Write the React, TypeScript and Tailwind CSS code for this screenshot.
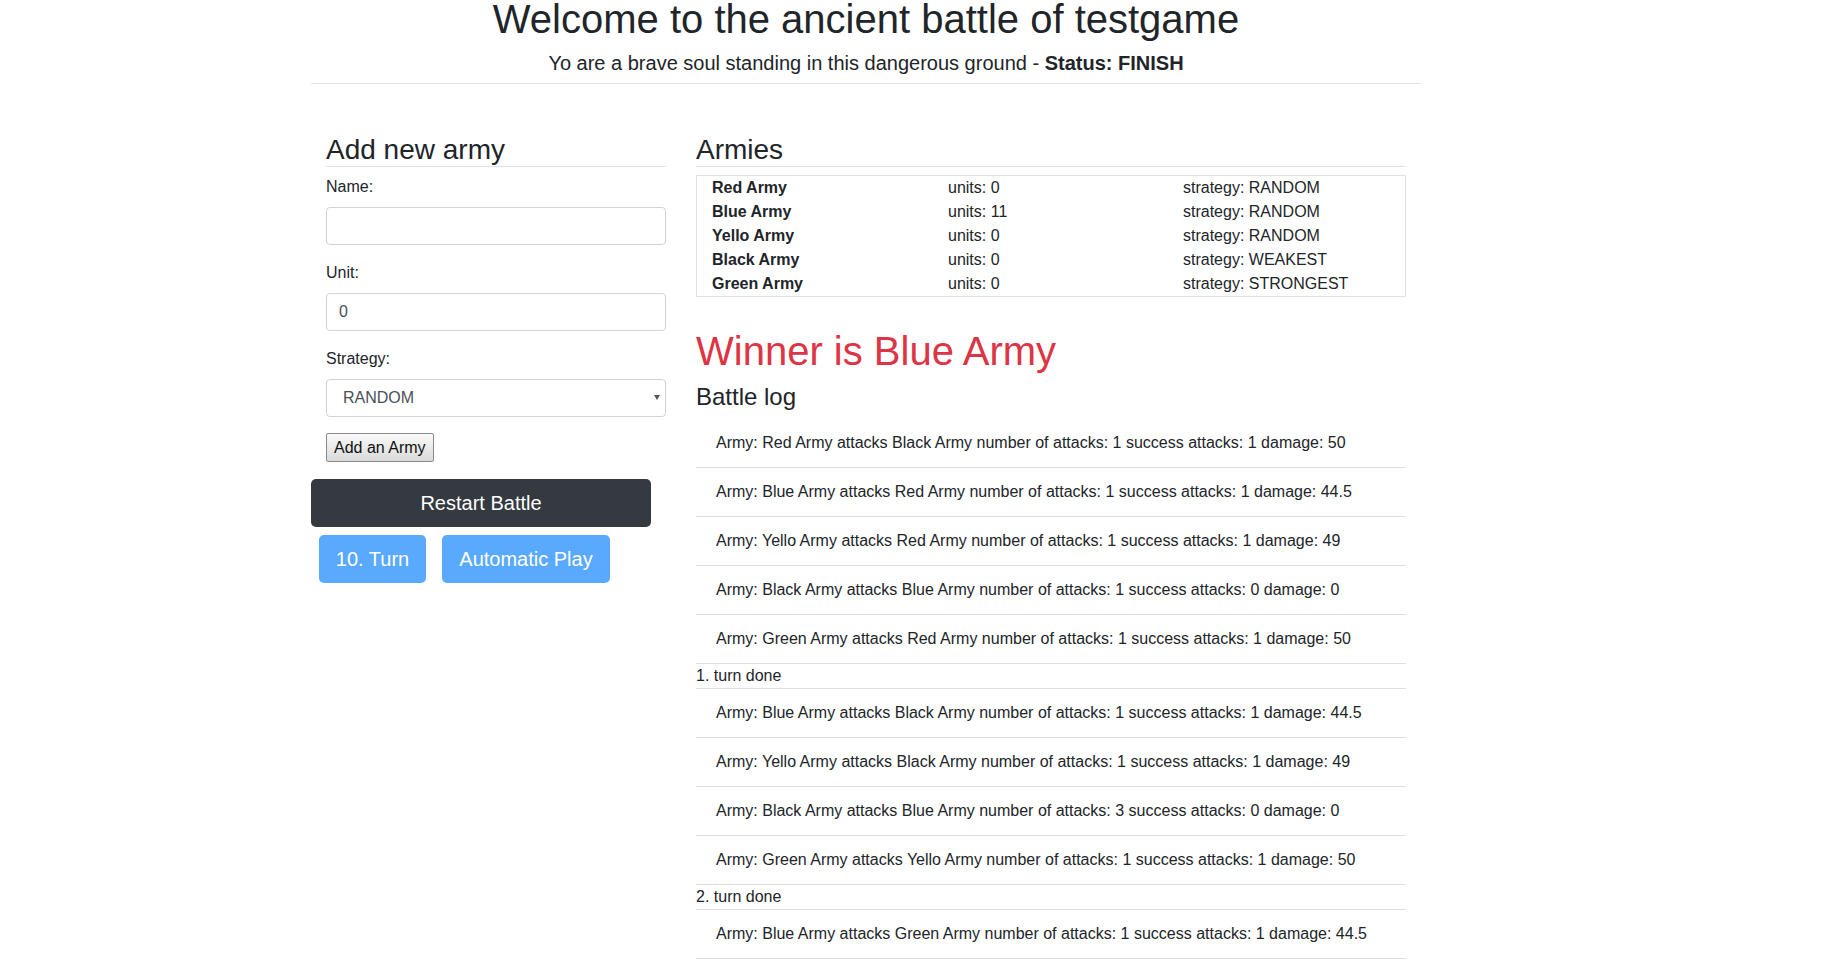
import React from "react";

type Attack = { from: string; to: string; n: number; ok: number; dmg: number };

const armies = [
  { name: "Red Army", units: 0, strategy: "RANDOM" },
  { name: "Blue Army", units: 11, strategy: "RANDOM" },
  { name: "Yello Army", units: 0, strategy: "RANDOM" },
  { name: "Black Army", units: 0, strategy: "WEAKEST" },
  { name: "Green Army", units: 0, strategy: "STRONGEST" },
];

const a = (from: string, to: string, n: number, ok: number, dmg: number): Attack => ({ from, to, n, ok, dmg });

const turns: Attack[][] = [
  [
    a("Red Army", "Black Army", 1, 1, 50),
    a("Blue Army", "Red Army", 1, 1, 44.5),
    a("Yello Army", "Red Army", 1, 1, 49),
    a("Black Army", "Blue Army", 1, 0, 0),
    a("Green Army", "Red Army", 1, 1, 50),
  ],
  [
    a("Blue Army", "Black Army", 1, 1, 44.5),
    a("Yello Army", "Black Army", 1, 1, 49),
    a("Black Army", "Blue Army", 3, 0, 0),
    a("Green Army", "Yello Army", 1, 1, 50),
  ],
  [
    a("Blue Army", "Green Army", 1, 1, 44.5),
    a("Yello Army", "Green Army", 1, 1, 49),
    a("Black Army", "Blue Army", 2, 0, 0),
    a("Green Army", "Blue Army", 1, 1, 50),
  ],
  [
    a("Blue Army", "Yello Army", 1, 1, 44.5),
    a("Yello Army", "Blue Army", 1, 0, 0),
    a("Black Army", "Blue Army", 1, 0, 0),
    a("Green Army", "Blue Army", 1, 1, 50),
  ],
  [
    a("Blue Army", "Black Army", 1, 1, 44.5),
    a("Black Army", "Blue Army", 1, 0, 0),
    a("Green Army", "Blue Army", 1, 0, 0),
  ],
  [
    a("Blue Army", "Green Army", 1, 1, 44.5),
    a("Black Army", "Blue Army", 1, 0, 0),
    a("Green Army", "Blue Army", 1, 1, 50),
  ],
  [
    a("Blue Army", "Black Army", 1, 1, 44.5),
    a("Green Army", "Blue Army", 1, 0, 0),
  ],
  [a("Blue Army", "Green Army", 1, 1, 44.5)],
];

export default function App() {
  return (
    <div
      className="h-screen overflow-y-scroll bg-white text-[#212529] text-[16px] leading-6 [&::-webkit-scrollbar]:w-[15px] [&::-webkit-scrollbar-track]:bg-[#f1f1f1] [&::-webkit-scrollbar-thumb]:bg-[#c1c1c1] [&::-webkit-scrollbar-thumb]:border-x-[2px] [&::-webkit-scrollbar-thumb]:border-[#f1f1f1]"
      style={{ fontFamily: '"Liberation Sans", Arial, sans-serif' }}
    >
      <div className="ml-[311px] w-[1110px] pb-4">
        {/* Header */}
        <div className="text-center">
          <h1 className="mt-[-5px] text-[40px] leading-[48px] font-normal">
            Welcome to the ancient battle of testgame
          </h1>
          <p className="mt-[5px] text-[20px] leading-[30px]">
            Yo are a brave soul standing in this dangerous ground - <b>Status: FINISH</b>
          </p>
          <hr className="mt-[5px] border-0 border-t border-[#e5e5e5]" />
        </div>

        <div className="mt-[49px] flex">
          {/* Left column */}
          <div className="w-[370px] shrink-0">
            <div className="px-[15px]">
              <h3 className="text-[28px] leading-[33px] font-normal border-b border-[#dee2e6]">Add new army</h3>
              <label className="mt-2 block">Name:</label>
              <input
                className="mt-2 block h-[38px] w-full rounded border border-[#ced4da] px-3 text-[#495057] outline-none"
                defaultValue=""
              />
              <label className="mt-4 block">Unit:</label>
              <input
                className="mt-2 block h-[38px] w-full rounded border border-[#ced4da] px-3 text-[#495057] outline-none"
                defaultValue="0"
              />
              <label className="mt-4 block">Strategy:</label>
              <div className="relative mt-2">
                <select
                  className="block h-[38px] w-full appearance-none rounded border border-[#ced4da] bg-white pl-4 pr-7 text-[#495057] outline-none"
                  defaultValue="RANDOM"
                >
                  <option>RANDOM</option>
                  <option>WEAKEST</option>
                  <option>STRONGEST</option>
                </select>
                <span className="pointer-events-none absolute right-[6px] top-[16px] h-0 w-0 border-x-[3.5px] border-t-[5px] border-x-transparent border-t-[#555]" />
              </div>
              <button className="mt-4 block h-[29px] rounded-[2px] border border-[#8a8a8a] bg-gradient-to-b from-[#fafafa] to-[#dadada] px-[7px] text-[16px] leading-[25px] text-[#111]">
                Add an Army
              </button>
            </div>
            <button className="mt-[17px] block h-12 w-[340px] rounded-[5px] bg-[#343a40] text-[20px] text-white">
              Restart Battle
            </button>
            <div className="mt-2 flex gap-4 pl-2">
              <button className="h-12 w-[107px] rounded-[5px] bg-[#59a9ff] text-[20px] text-white">10. Turn</button>
              <button className="h-12 w-[168px] rounded-[5px] bg-[#59a9ff] text-[20px] text-white">Automatic Play</button>
            </div>
          </div>

          {/* Right column */}
          <div className="w-[740px] px-[15px]">
            <h3 className="text-[28px] leading-[33px] font-normal border-b border-[#dee2e6]">Armies</h3>
            <div className="mt-2 border border-[#dee2e6] pl-[15px]">
              {armies.map((army) => (
                <div key={army.name} className="grid grid-cols-[236px_235px_1fr]">
                  <span className="font-bold">{army.name}</span>
                  <span>units: {army.units}</span>
                  <span>strategy: {army.strategy}</span>
                </div>
              ))}
            </div>

            <h1 className="mt-[30px] text-[40px] leading-[48px] font-normal text-[#dc3545]">Winner is Blue Army</h1>
            <h4 className="mt-[7px] text-[24px] leading-[29px] font-normal">Battle log</h4>

            <div className="mt-[8px]">
              {turns.map((turn, i) => (
                <div key={i}>
                  {turn.map((t, j) => (
                    <div key={j} className="border-b border-[#dfdfdf] px-5 py-3">
                      Army: {t.from} attacks {t.to} number of attacks: {t.n} success attacks: {t.ok} damage: {t.dmg}
                    </div>
                  ))}
                  {i < turns.length - 1 && (
                    <div className="border-b border-[#dfdfdf]">{i + 1}. turn done</div>
                  )}
                </div>
              ))}
            </div>
          </div>
        </div>
      </div>
    </div>
  );
}
